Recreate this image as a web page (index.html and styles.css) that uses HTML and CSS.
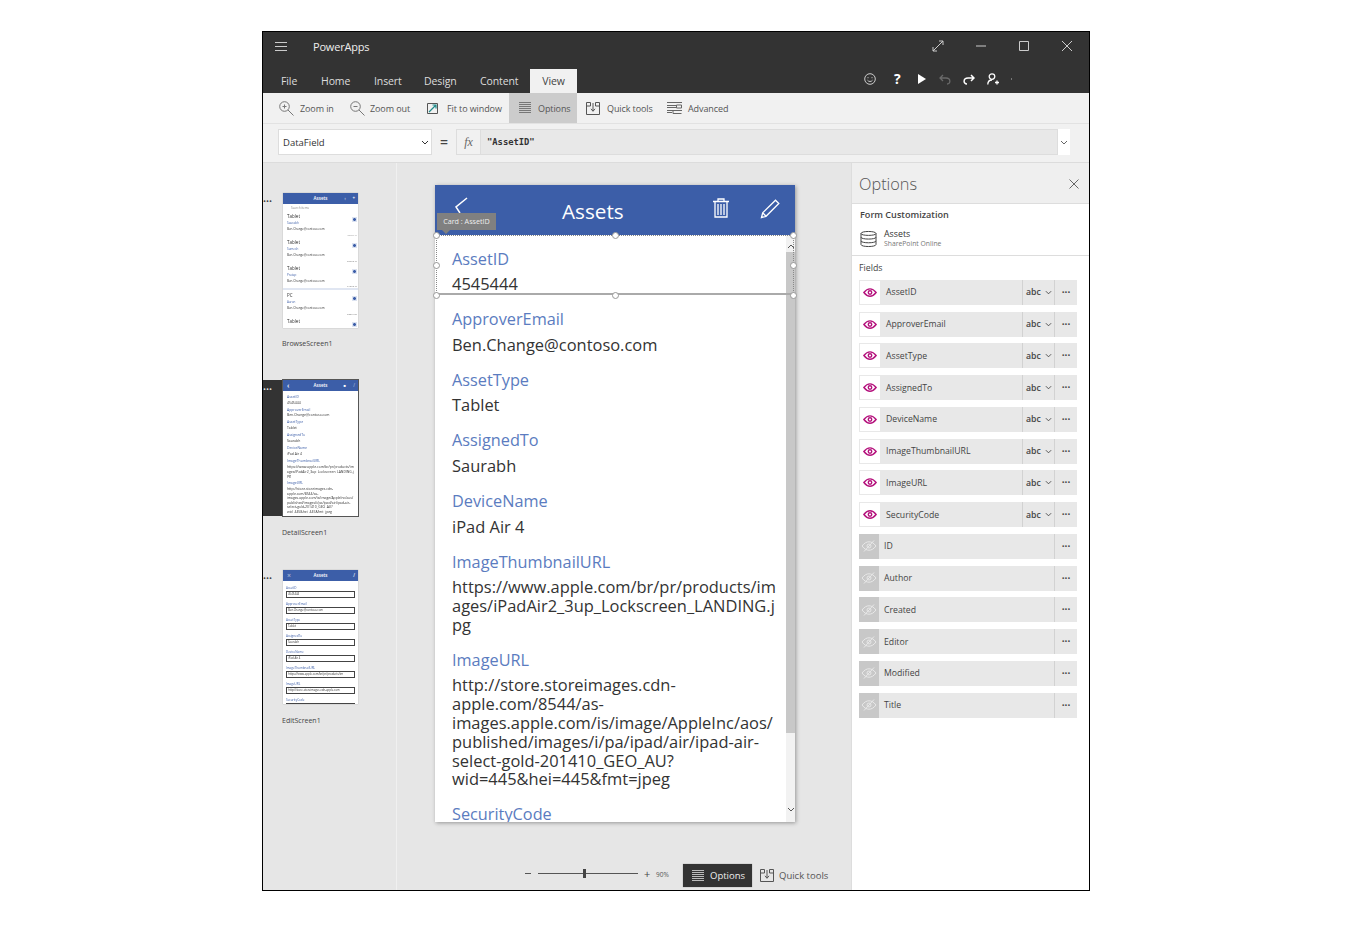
FILE: index.html
```html
<!DOCTYPE html>
<html lang="en">
<head>
  <meta charset="UTF-8" />
  <title>PowerApps</title>
  <link rel="stylesheet" href="styles.css">
</head>
<body>
<svg class="defs" width="0" height="0">
  <symbol id="eye" viewBox="0 0 16 10">
    <path d="M1 5C3.500 1.800 5.700.8 8 .8s4.500 1 7 4.200C12.500 8.200 10.300 9.200 8 9.200S3.500 8.200 1 5z" fill="none" stroke="currentColor" stroke-width="1.600"/>
    <circle cx="8" cy="5" r="2" fill="none" stroke="currentColor" stroke-width="1.600"/>
  </symbol>
  <symbol id="eye-off" viewBox="0 0 16 12">
    <path d="M1 6C3.500 2.800 5.700 1.800 8 1.800s4.500 1 7 4.200c-2.500 3.200-4.700 4.200-7 4.200S3.500 9.200 1 6z" fill="none" stroke="currentColor"/>
    <circle cx="8" cy="6" r="2" fill="none" stroke="currentColor"/>
    <path d="M3 11.500L13 .5" stroke="currentColor"/>
  </symbol>
  <symbol id="lines" viewBox="0 0 12 12">
    <path d="M0 .5h12M0 2.500h12M0 4.500h12M0 6.500h12M0 8.500h12M0 10.500h12" stroke="currentColor" stroke-width="1"/>
  </symbol>
  <symbol id="quick" viewBox="0 0 14 13">
    <path d="M4.500.500H.5v12h13V.500h-4M.5 4h4V.500M13.500 4h-4V.500" fill="none" stroke="currentColor"/>
    <path d="M7 1v8M5 6.800l2 2.500 2-2.500" fill="none" stroke="currentColor"/>
  </symbol>
  <symbol id="chev" viewBox="0 0 8 5">
    <path d="M1 1l3 3 3-3" fill="none" stroke="currentColor"/>
  </symbol>
</svg>

<div class="window">
  <header class="titlebar">
    <svg class="hamburger" width="12" height="9" viewBox="0 0 12 9"><path d="M0 .5h12M0 4.500h12M0 8.500h12" stroke="#ccc"/></svg>
    <span class="app-name">PowerApps</span>
    <div class="win-btns">
      <svg width="12" height="12" viewBox="0 0 12 12"><path d="M1 11L11 1M7 1h4v4M1 7v4h4" fill="none" stroke="#ccc"/></svg>
      <svg width="12" height="12" viewBox="0 0 12 12"><path d="M1 6h10" stroke="#ccc"/></svg>
      <svg width="12" height="12" viewBox="0 0 12 12"><path d="M1.500 1.500h9v9h-9z" fill="none" stroke="#ccc"/></svg>
      <svg width="12" height="12" viewBox="0 0 12 12"><path d="M1 1l10 10M11 1L1 11" stroke="#ccc"/></svg>
    </div>
  </header>
  <nav class="tabbar">
    <span class="tab t-file">File</span>
    <span class="tab t-home">Home</span>
    <span class="tab t-insert">Insert</span>
    <span class="tab t-design">Design</span>
    <span class="tab t-content">Content</span>
    <span class="tab active">View</span>
    <div class="tools">
      <svg class="i-smile" width="12" height="12" viewBox="0 0 12 12"><circle cx="6" cy="6" r="5.300" fill="none" stroke="#ccc"/><path d="M3.500 7.200c1 1.700 4 1.700 5 0" fill="none" stroke="#ccc"/><path d="M4 4.200v1M8 4.200v1" stroke="#ccc"/></svg>
      <span class="i-help">?</span>
      <svg class="i-play" width="9" height="10" viewBox="0 0 9 10"><path d="M1 0l8 5-8 5z" fill="#fff"/></svg>
      <svg class="i-undo" width="12" height="11" viewBox="0 0 12 11"><path d="M4 1L1 4l3 3M1 4h6c5 0 5 6 1 6" fill="none" stroke="#6a6a6a" stroke-width="1.300"/></svg>
      <svg class="i-redo" width="12" height="11" viewBox="0 0 12 11"><path d="M8 1l3 3-3 3M11 4H5c-5 0-5 6-1 6" fill="none" stroke="#fff" stroke-width="1.500"/></svg>
      <svg class="i-user" width="12" height="12" viewBox="0 0 12 12"><circle cx="5" cy="3.600" r="2.800" fill="none" stroke="#fff" stroke-width="1.300"/><path d="M.8 11.500c0-3 1.500-4.500 4.200-4.500M8 9.500h4M10 7.500v4" fill="none" stroke="#fff" stroke-width="1.300"/></svg>
      <span class="i-tick"></span>
    </div>
  </nav>
  <div class="ribbon">
    <span class="rb-item rb-zin"><svg width="15" height="15" viewBox="0 0 15 15"><circle cx="5.500" cy="5.500" r="4.800" fill="none" stroke="#777"/><path d="M9 9l5.500 5.500M3.500 5.500h4M5.500 3.500v4" fill="none" stroke="#777"/></svg>Zoom in</span>
    <span class="rb-item rb-zout"><svg width="15" height="15" viewBox="0 0 15 15"><circle cx="5.500" cy="5.500" r="4.800" fill="none" stroke="#777"/><path d="M9 9l5.500 5.500M3.500 5.500h4" fill="none" stroke="#777"/></svg>Zoom out</span>
    <span class="rb-item rb-fit"><svg width="11" height="11" viewBox="0 0 11 11"><path d="M.5.500h10v10H.5z" fill="none" stroke="#555"/><path d="M2 9l7-7M5.500 2H9v3.500" fill="none" stroke="#1f8a8a" stroke-width="1.200"/></svg>Fit to window</span>
    <span class="rb-item rb-opt"><svg width="12" height="12"><use href="#lines"/></svg>Options</span>
    <span class="rb-item rb-quick"><svg width="14" height="13"><use href="#quick"/></svg>Quick tools</span>
    <span class="rb-item rb-adv"><svg width="15" height="12" viewBox="0 0 15 12"><path d="M0 .5h15M0 3.500h9M0 5.500h9M9.500 3v3h5V3zM0 8.500h15M0 10.500h5M6 9v2.500h8.500" fill="none" stroke="#666"/></svg>Advanced</span>
  </div>
  <div class="formulabar">
    <div class="prop">DataField<svg width="8" height="5"><use href="#chev"/></svg></div>
    <span class="equals">=</span>
    <div class="fx">fx</div>
    <div class="formula">"AssetID"</div>
    <div class="formula-more"><svg width="8" height="5"><use href="#chev"/></svg></div>
  </div>

  <div class="workspace">
    <aside class="screens">
      <div class="screen-row r-browse">
        <span class="dots">•••</span>
        <div class="thumb">
          <div class="thumb-head">Assets<i class="thumb-r">+</i><i class="thumb-m">↕</i></div>
          <div class="thumb-search">Search items</div>
          <div class="t-item"><b>Tablet</b><em>Saurabh</em><span>Ben.Change@contoso.com</span><small>4545444</small></div>
          <div class="t-item"><b>Tablet</b><em>Sumesh</em><span>Ben.Change@contoso.com</span><small>5676545</small></div>
          <div class="t-item last"><b>Tablet</b><em>Pratap</em><span>Ben.Change@contoso.com</span><small>7456546</small></div>
          <div class="t-item"><b>PC</b><em>Aaron</em><span>Ben.Change@contoso.com</span><small>3256456</small></div>
          <div class="t-item"><b>Tablet</b></div>
        </div>
      </div>
      <p class="screen-name n-browse">BrowseScreen1</p>

      <div class="screen-row selected">
        <span class="dots">•••</span>
        <div class="thumb">
          <div class="thumb-head"><i class="thumb-l">‹</i>Assets<i class="thumb-r dim">/</i><i class="thumb-m">■</i></div>
          <div class="t-form">
            <em>AssetID</em><span>4545444</span>
            <em>ApproverEmail</em><span>Ben.Change@contoso.com</span>
            <em>AssetType</em><span>Tablet</span>
            <em>AssignedTo</em><span>Saurabh</span>
            <em>DeviceName</em><span>iPad Air 4</span>
            <em>ImageThumbnailURL</em><span>https://www.apple.com/br/pr/products/im<br>ages/iPadAir2_3up_Lockscreen_LANDING.j<br>pg</span>
            <em>ImageURL</em><span>http://store.storeimages.cdn-<br>apple.com/8544/as-<br>images.apple.com/is/image/AppleInc/aos/<br>published/images/i/pa/ipad/air/ipad-air-<br>select-gold-201410_GEO_AU?<br>wid=445&amp;hei=445&amp;fmt=jpeg</span>
          </div>
        </div>
      </div>
      <p class="screen-name n-detail">DetailScreen1</p>

      <div class="screen-row r-edit">
        <span class="dots">•••</span>
        <div class="thumb">
          <div class="thumb-head"><i class="thumb-l dim">×</i>Assets<i class="thumb-r">/</i></div>
          <div class="t-edit">
            <em>AssetID</em><span>4545444</span>
            <em>ApproverEmail</em><span>Ben.Change@contoso.com</span>
            <em>AssetType</em><span>Tablet</span>
            <em>AssignedTo</em><span>Saurabh</span>
            <em>DeviceName</em><span>iPad Air 4</span>
            <em>ImageThumbnailURL</em><span>https://www.apple.com/br/pr/products/im</span>
            <em>ImageURL</em><span>http://store.storeimages.cdn-apple.com</span>
            <em>SecurityCode</em><span></span>
          </div>
        </div>
      </div>
      <p class="screen-name n-edit">EditScreen1</p>
    </aside>

    <main class="canvas">
      <div class="stage">
        <div class="phone">
          <div class="phone-head">
            <svg class="back" width="14" height="18" viewBox="0 0 14 18"><path d="M13 1L2 10l4 6" fill="none" stroke="#fff" stroke-width="1.500"/></svg>
            <span class="phone-title">Assets</span>
            <svg class="trash" width="18" height="20" viewBox="0 0 18 20"><path d="M1 3.500h16M6 3V1h6v2M3 4v15h12V4M6 6v11M9 6v11M12 6v11" fill="none" stroke="#fff" stroke-width="1.300"/></svg>
            <svg class="pencil" width="20" height="20" viewBox="0 0 20 20"><path d="M1.500 18.500l1.200-4.700L15.500 1.200l3.300 3.300L6 17.300zM2.700 13.800L6 17.300" fill="none" stroke="#fff" stroke-width="1.300"/></svg>
          </div>
          <div class="form">
            <div class="card"><label>AssetID</label><p>4545444</p></div>
            <div class="card"><label>ApproverEmail</label><p>Ben.Change@contoso.com</p></div>
            <div class="card"><label>AssetType</label><p>Tablet</p></div>
            <div class="card"><label>AssignedTo</label><p>Saurabh</p></div>
            <div class="card"><label>DeviceName</label><p>iPad Air 4</p></div>
            <div class="card"><label>ImageThumbnailURL</label><p>https://www.apple.com/br/pr/products/im<br>ages/iPadAir2_3up_Lockscreen_LANDING.j<br>pg</p></div>
            <div class="card"><label>ImageURL</label><p>http://store.storeimages.cdn-<br>apple.com/8544/as-<br>images.apple.com/is/image/AppleInc/aos/<br>published/images/i/pa/ipad/air/ipad-air-<br>select-gold-201410_GEO_AU?<br>wid=445&amp;hei=445&amp;fmt=jpeg</p></div>
            <div class="card"><label>SecurityCode</label></div>
            <div class="scrollbar">
              <svg class="sb-up" width="8" height="5"><use href="#chev"/></svg>
              <div class="sb-thumb"></div>
              <svg class="sb-down" width="8" height="5"><use href="#chev"/></svg>
            </div>
          </div>
          <div class="selection"></div>
          <span class="handle h1"></span><span class="handle h2"></span><span class="handle h3"></span>
          <span class="handle h4"></span><span class="handle h5"></span>
          <span class="handle h6"></span><span class="handle h7"></span><span class="handle h8"></span>
          <div class="card-tip">Card : AssetID</div>
        </div>
      </div>
      <footer class="statusbar">
        <span class="minus"></span>
        <div class="slider"><span class="slider-thumb"></span></div>
        <span class="plus">+</span>
        <span class="pct">90%</span>
        <span class="st-options"><svg width="12" height="12"><use href="#lines"/></svg>Options</span>
        <span class="st-quick"><svg width="14" height="13"><use href="#quick"/></svg>Quick tools</span>
      </footer>
    </main>

    <aside class="options">
      <div class="opt-head">
        <span>Options</span>
        <svg width="10" height="10" viewBox="0 0 10 10"><path d="M.5.500l9 9M9.500.500l-9 9" stroke="#666"/></svg>
      </div>
      <div class="opt-source">
        <h4>Form Customization</h4>
        <div class="source">
          <svg width="17" height="18" viewBox="0 0 17 18"><path d="M1 3.500C1 .8 16 .8 16 3.500v11c0 2.700-15 2.700-15 0zM1 3.500c0 2.500 15 2.500 15 0M1 7.200c0 2.500 15 2.500 15 0M1 10.900c0 2.500 15 2.500 15 0" fill="none" stroke="#444"/></svg>
          <div><strong>Assets</strong><small>SharePoint Online</small></div>
        </div>
      </div>
      <div class="fields">
        <h5>Fields</h5>
        <div class="field on"><span class="eye"><svg width="14" height="9"><use href="#eye"/></svg></span><span class="f-name">AssetID</span><span class="f-type">abc<svg width="7" height="5"><use href="#chev"/></svg></span><span class="f-more">···</span></div>
        <div class="field on"><span class="eye"><svg width="14" height="9"><use href="#eye"/></svg></span><span class="f-name">ApproverEmail</span><span class="f-type">abc<svg width="7" height="5"><use href="#chev"/></svg></span><span class="f-more">···</span></div>
        <div class="field on"><span class="eye"><svg width="14" height="9"><use href="#eye"/></svg></span><span class="f-name">AssetType</span><span class="f-type">abc<svg width="7" height="5"><use href="#chev"/></svg></span><span class="f-more">···</span></div>
        <div class="field on"><span class="eye"><svg width="14" height="9"><use href="#eye"/></svg></span><span class="f-name">AssignedTo</span><span class="f-type">abc<svg width="7" height="5"><use href="#chev"/></svg></span><span class="f-more">···</span></div>
        <div class="field on"><span class="eye"><svg width="14" height="9"><use href="#eye"/></svg></span><span class="f-name">DeviceName</span><span class="f-type">abc<svg width="7" height="5"><use href="#chev"/></svg></span><span class="f-more">···</span></div>
        <div class="field on"><span class="eye"><svg width="14" height="9"><use href="#eye"/></svg></span><span class="f-name">ImageThumbnailURL</span><span class="f-type">abc<svg width="7" height="5"><use href="#chev"/></svg></span><span class="f-more">···</span></div>
        <div class="field on"><span class="eye"><svg width="14" height="9"><use href="#eye"/></svg></span><span class="f-name">ImageURL</span><span class="f-type">abc<svg width="7" height="5"><use href="#chev"/></svg></span><span class="f-more">···</span></div>
        <div class="field on"><span class="eye"><svg width="14" height="9"><use href="#eye"/></svg></span><span class="f-name">SecurityCode</span><span class="f-type">abc<svg width="7" height="5"><use href="#chev"/></svg></span><span class="f-more">···</span></div>
        <div class="field"><span class="eye"><svg width="16" height="12"><use href="#eye-off"/></svg></span><span class="f-name">ID</span><span class="f-more">···</span></div>
        <div class="field"><span class="eye"><svg width="16" height="12"><use href="#eye-off"/></svg></span><span class="f-name">Author</span><span class="f-more">···</span></div>
        <div class="field"><span class="eye"><svg width="16" height="12"><use href="#eye-off"/></svg></span><span class="f-name">Created</span><span class="f-more">···</span></div>
        <div class="field"><span class="eye"><svg width="16" height="12"><use href="#eye-off"/></svg></span><span class="f-name">Editor</span><span class="f-more">···</span></div>
        <div class="field"><span class="eye"><svg width="16" height="12"><use href="#eye-off"/></svg></span><span class="f-name">Modified</span><span class="f-more">···</span></div>
        <div class="field"><span class="eye"><svg width="16" height="12"><use href="#eye-off"/></svg></span><span class="f-name">Title</span><span class="f-more">···</span></div>
      </div>
    </aside>
  </div>
</div>
</body>
</html>
```

FILE: styles.css
```css
* { box-sizing: border-box; }
body {
  margin: 0;
  background: #fff;
  color: #444;
  font-family: "Open Sans", sans-serif;
}
.defs { position: absolute; }
svg { display: block; flex: none; }

.window {
  width: 828px;
  height: 860px;
  margin: 31px 0 0 262px;
  border: 1px solid #000;
  display: flex;
  flex-direction: column;
  overflow: hidden;
}

/* title bar */
.titlebar {
  height: 33px;
  background: #333;
  display: flex;
  align-items: center;
  padding: 0 16px 5px 12px;
  flex: none;
}
.app-name { color: #eee; font-size: 11px; margin-left: 26px; letter-spacing: -.2px; }
.win-btns { margin-left: auto; display: flex; gap: 31px; }

.tabbar {
  height: 28px;
  background: #333;
  display: flex;
  align-items: flex-end;
  flex: none;
  padding-left: 18px;
}
.tab { color: #ddd; font-size: 10.500px; line-height: 24px; letter-spacing: -.1px; }
.t-file { width: 40px; }
.t-home { width: 53px; }
.t-insert { width: 50px; }
.t-design { width: 56px; }
.t-content { width: 50px; }
.tab.active {
  width: 47px;
  height: 24px;
  line-height: 24px;
  background: #f1f1f1;
  color: #444;
  text-align: center;
}
.tools { margin-left: auto; display: flex; align-items: center; height: 24px; padding-right: 77px; margin-bottom: 2px; }
.i-smile { margin-right: 17px; }
.i-help { color: #fff; font-weight: 700; font-size: 14px; width: 24px; padding-left: 1px; line-height: 14px; }
.i-play { margin-right: 13px; }
.i-undo { margin-right: 12px; }
.i-redo { margin-right: 12px; }
.i-tick { width: 1px; height: 2px; background: #777; margin-left: 12px; }

/* ribbon */
.ribbon {
  height: 31px;
  background: #f1f1f1;
  border-bottom: 1px solid #e2e2e2;
  display: flex;
  flex: none;
  padding-left: 16px;
}
.rb-item { display: flex; align-items: center; font-size: 9px; letter-spacing: -.1px; color: #555; height: 30px; }
.rb-zin { gap: 6px; width: 71px; }
.rb-zout { gap: 5px; width: 77px; }
.rb-fit { gap: 9px; width: 83px; }
.rb-opt { gap: 7px; width: 68px; background: #ccc; padding-left: 10px; margin-left: -1px; }
.rb-opt svg { color: #777; }
.rb-quick { gap: 7px; width: 81px; padding-left: 9px; margin-right: 9px; }
.rb-adv { gap: 6px; }

/* formula bar */
.formulabar {
  height: 39px;
  background: #f1f1f1;
  border-bottom: 1px solid #dcdcdc;
  display: flex;
  align-items: center;
  flex: none;
  padding: 0 19px 2px 15px;
}
.prop {
  width: 154px;
  height: 26px;
  background: #fff;
  border: 1px solid #ddd;
  display: flex;
  align-items: center;
  justify-content: space-between;
  padding: 0 2px 0 4px;
  font-size: 9.500px;
  color: #333;
}
.equals { width: 24px; text-align: center; font-size: 14px; font-weight: 600; color: #444; line-height: 14px; }
.fx {
  width: 25px;
  height: 26px;
  border: 1px solid #ddd;
  font-family: "Liberation Serif", serif;
  font-style: italic;
  font-size: 12px;
  color: #666;
  text-align: center;
  line-height: 24px;
}
.formula {
  flex: 1;
  height: 26px;
  background: #e8e8e8;
  border: 1px solid #ddd;
  border-left: none;
  font-family: "DejaVu Sans Mono", monospace;
  font-weight: 700;
  font-size: 8.800px;
  line-height: 24px;
  padding-left: 6px;
  color: #333;
}
.formula-more {
  width: 12px;
  height: 26px;
  background: #fff;
  color: #666;
  display: flex;
  align-items: center;
  justify-content: center;
}

/* workspace */
.workspace { flex: 1; display: flex; min-height: 0; }

.screens {
  width: 134px;
  flex: none;
  background: #e6e6e6;
  border-right: 1px solid #f0f0f0;
  padding-top: 30px;
}
.screen-row {
  display: flex;
  height: 135px;
  padding-left: 20px;
  position: relative;
}
.screen-row.selected { background: #333; width: 96px; height: 136px; }
.screen-row.r-edit { height: 134px; }
.dots { position: absolute; left: 0; top: 4px; font-size: 8px; color: #444; line-height: 8px; }
.selected .dots { color: #ddd; top: 5px; }
.screen-name { margin: 0; padding-left: 19px; font-size: 7px; color: #444; line-height: 10px; }
.n-browse { margin-top: 11px; margin-bottom: 31px; }
.n-detail { margin-top: 12px; margin-bottom: 32px; }
.n-edit { margin-top: 12px; }

.thumb {
  width: 75px;
  background: #fff;
  overflow: hidden;
  box-shadow: 0 0 1px #999;
  flex: none;
  filter: blur(.3px);
}
.selected .thumb { box-shadow: 0 0 0 1px #555; }
.thumb-head {
  height: 11px;
  background: #3c5ea8;
  color: #fff;
  font-size: 4.500px;
  font-weight: 600;
  line-height: 11px;
  text-align: center;
  position: relative;
}
.thumb-head i { position: absolute; top: 0; font-style: normal; }
.thumb-r { right: 3px; }
.thumb-l { left: 4px; font-size: 7px; }
.thumb-m { right: 12px; font-size: 4px; }
.thumb-head i.dim { opacity: .5; }
.thumb-search { font-size: 3px; color: #888; padding: 2px 0 1px 8px; line-height: 4px; }
.t-item {
  font-size: 3px;
  line-height: 5px;
  padding: 2px 4px 0 4px;
  height: 26px;
  position: relative;
  color: #333;
}
.t-item.last { border-bottom: 2px solid #e0e6f2; height: 27px; }
.t-item::after {
  content: "";
  position: absolute;
  right: 1px;
  top: 6px;
  width: 5px;
  height: 5px;
  background: radial-gradient(#3c5ea8 35%, #dbe2f0 45%);
}
.t-item b { display: block; font-weight: 400; font-size: 4.500px; line-height: 7px; }
.t-item em { display: block; font-style: normal; color: #3c5ea8; margin-top: 1px; }
.t-item span { display: block; margin-top: 1px; }
.t-item small { position: absolute; right: 1px; bottom: 0; font-size: 2.500px; line-height: 3px; color: #777; }

.t-form { padding: 2px 4px; font-size: 3.400px; line-height: 4.600px; color: #333; }
.t-form em { display: block; font-style: normal; color: #3c5ea8; margin-top: 1.700px; }
.t-form span { display: block; margin-top: 1.300px; white-space: nowrap; margin-bottom: 2.400px; }

.t-edit { padding: 1px 3px; font-size: 3px; line-height: 4px; color: #333; }
.t-edit em { display: block; font-style: normal; color: #3c5ea8; margin-top: 4px; }
.t-edit span {
  display: block;
  height: 7px;
  margin-top: 1px;
  border: 1px solid #444;
  font-size: 2.800px;
  line-height: 5px;
  padding-left: 1px;
  white-space: nowrap;
  overflow: hidden;
}

/* canvas */
.canvas { flex: 1; background: #e6e6e6; display: flex; flex-direction: column; min-width: 0; }
.stage { flex: 1; padding: 22px 0 0 38px; }
.phone {
  width: 360px;
  height: 637px;
  background: #fff;
  box-shadow: 1px 1px 4px rgba(0, 0, 0, .35);
  position: relative;
  display: flex;
  flex-direction: column;
}
.phone-head {
  height: 50px;
  background: #3c5ea8;
  display: flex;
  align-items: center;
  padding: 0 15px 0 19px;
  color: #fff;
  flex: none;
}
.back { margin-top: -8px; }
.phone-title { font-size: 20.700px; width: 285px; margin-top: 1px; padding-left: 94px; }
.trash { margin: -4px 0 0 -29px; }
.pencil { margin: -3px 0 0 30px; }

.form { flex: 1; position: relative; overflow: hidden; padding: 12.700px 20px 0 17px; }
.card label { display: block; color: #5b7cc0; font-size: 16.300px; line-height: 22px; }
.card p {
  margin: 5.500px 0 14.300px;
  color: #333;
  font-size: 16.450px;
  line-height: 18.800px;
  white-space: nowrap;
}
.scrollbar {
  position: absolute;
  top: 0;
  right: 0;
  bottom: 0;
  width: 9px;
  background: #f2f2f2;
  display: flex;
  flex-direction: column;
  align-items: center;
  color: #555;
}
.sb-up { transform: scaleY(-1); margin-top: 9px; flex: none; }
.sb-thumb { width: 100%; height: 481px; margin-top: 3px; background: #c8c8c8; flex: none; }
.sb-down { margin-top: 74px; flex: none; }

.selection {
  position: absolute;
  left: 1px;
  top: 50px;
  width: 358px;
  height: 60px;
  border: 1px dotted #888;
  border-bottom: 2px solid #aaa;
  pointer-events: none;
}
.handle {
  position: absolute;
  width: 7px;
  height: 7px;
  margin: -3.500px 0 0 -3.500px;
  background: #fff;
  border: 1px solid #999;
  border-radius: 50%;
}
.h1 { left: 1px; top: 50px; }
.h2 { left: 180px; top: 50px; }
.h3 { left: 358px; top: 50px; }
.h4 { left: 1px; top: 80px; }
.h5 { left: 358px; top: 80px; }
.h6 { left: 1px; top: 110px; }
.h7 { left: 180px; top: 110px; }
.h8 { left: 358px; top: 110px; }
.card-tip {
  position: absolute;
  left: 2px;
  top: 28px;
  width: 59px;
  height: 17px;
  background: #808080;
  color: #eee;
  font-size: 7.200px;
  line-height: 17px;
  text-align: center;
}
.card-tip::after {
  content: "";
  position: absolute;
  left: 5px;
  top: 17px;
  border: 4px solid transparent;
  border-top-color: #808080;
  border-bottom: none;
}

/* status bar */
.statusbar {
  height: 27px;
  margin-bottom: 1px;
  display: flex;
  align-items: center;
  flex: none;
  padding-left: 128px;
}
.minus { width: 6px; height: 1px; background: #555; margin: 0 7px 5px 0; }
.slider { width: 100px; height: 1px; background: #555; position: relative; margin: 0 6px 5px 0; }
.slider-thumb { position: absolute; left: 45px; top: -4px; width: 3px; height: 9px; background: #444; }
.plus { font-size: 11px; line-height: 11px; color: #444; width: 12px; margin-bottom: 4px; }
.pct { font-size: 6.500px; color: #555; width: 27px; margin-bottom: 3px; }
.st-options {
  width: 69px;
  height: 23px;
  background: #333;
  color: #eee;
  font-size: 9.500px;
  display: flex;
  align-items: center;
  gap: 6px;
  padding-left: 9px;
  box-shadow: 0 0 1px #888;
}
.st-options svg { color: #bbb; }
.st-quick { display: flex; align-items: center; gap: 5px; font-size: 9.500px; color: #555; margin-left: 8px; }

/* options panel */
.options { width: 238px; flex: none; background: #fff; border-left: 1px solid #ddd; }
.opt-head {
  height: 41px;
  background: #efefef;
  border-bottom: 1px solid #ddd;
  display: flex;
  align-items: center;
  justify-content: space-between;
  padding: 1px 10px 0 7px;
  font-size: 16.300px;
  font-weight: 300;
  color: #555;
}
.opt-source { height: 52px; border-bottom: 1px solid #ddd; padding: 5px 0 0 8px; }
.opt-source h4 { margin: 0; font-size: 9.100px; line-height: 12px; font-weight: 600; color: #444; }
.source { display: flex; align-items: center; gap: 7px; margin-top: 8px; }
.source svg { margin-top: -1px; }
.source strong { display: block; font-weight: 400; font-size: 8.800px; line-height: 10px; color: #333; }
.source small { display: block; font-size: 6.800px; line-height: 10px; color: #777; }
.fields { padding: 6px 12px 0 7px; display: flex; flex-direction: column; gap: 6.750px; }
.fields h5 { margin: 0 0 -1px; font-size: 8.800px; line-height: 12px; font-weight: 400; color: #444; }
.field {
  height: 25px;
  background: #e8e8e8;
  display: flex;
  align-items: center;
  font-size: 8.700px;
  color: #444;
}
.eye {
  width: 20px;
  height: 100%;
  background: #c8c8c8;
  color: #e8e8e8;
  display: flex;
  align-items: center;
  justify-content: center;
}
.field.on .eye {
  width: 20px;
  margin-left: 1px;
  height: 23px;
  background: #fff;
  color: #b5127d;
}
.f-name { flex: 1; padding-left: 5px; }
.field.on .f-name { padding-left: 6px; }
.f-type {
  width: 32px;
  height: 100%;
  border-left: 1px solid #d2d2d2;
  display: flex;
  align-items: center;
  gap: 4px;
  padding-left: 3px;
  font-weight: 600;
}
.f-more {
  width: 23px;
  height: 100%;
  border-left: 1px solid #d2d2d2;
  text-align: center;
  line-height: 25px;
  font-weight: 700;
  font-size: 10px;
}
```
